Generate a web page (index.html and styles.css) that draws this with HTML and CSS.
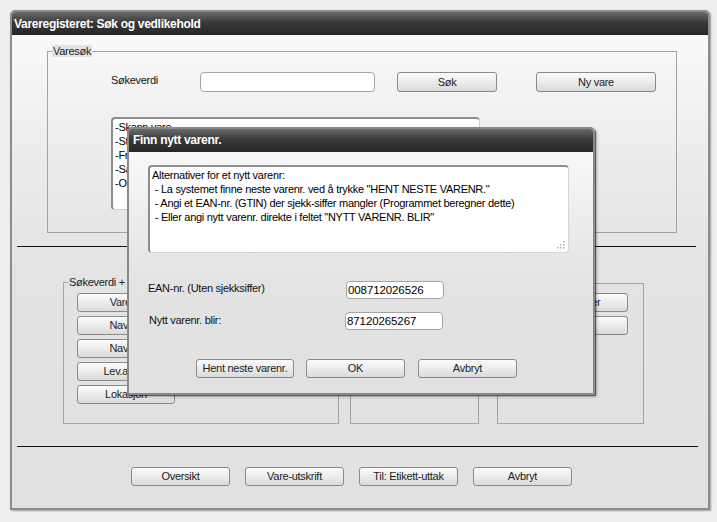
FILE: index.html
```html
<!DOCTYPE html>
<html>
<head>
<meta charset="utf-8">
<link rel="stylesheet" href="styles.css">
</head>
<body>
<div class="window">
  <div class="titlebar">Vareregisteret: Søk og vedlikehold</div>
  <div class="content">
    <fieldset class="group search">
      <legend>Varesøk</legend>
      <div class="search-inner">
        <div class="search-row">
          <span class="lbl">Søkeverdi</span>
          <div class="input search-input"></div>
          <button class="btn btn-sok">Søk</button>
          <button class="btn btn-ny">Ny vare</button>
        </div>
        <div class="listbox">
          <div>-Skann vare</div>
          <div>-Standard søk</div>
          <div>-Fritekst søk</div>
          <div>-Sammensatt søk</div>
          <div>-Oppslag</div>
        </div>
      </div>
    </fieldset>
    <div class="sep"></div>
    <div class="groups">
      <fieldset class="group g1">
        <legend>Søkeverdi + sortering</legend>
        <div class="btn-col g1-col">
          <button class="btn">Varenr.</button>
          <button class="btn">Navn 1</button>
          <button class="btn">Navn 2</button>
          <button class="btn">Lev.art.nr.</button>
          <button class="btn">Lokasjon</button>
        </div>
      </fieldset>
      <fieldset class="group g2"></fieldset>
      <fieldset class="group g3">
        <div class="btn-col">
          <button class="btn">Varelister</button>
          <button class="btn">Lager</button>
        </div>
      </fieldset>
    </div>
    <div class="sep sep2"></div>
    <div class="actions">
      <button class="btn">Oversikt</button>
      <button class="btn">Vare-utskrift</button>
      <button class="btn">Til: Etikett-uttak</button>
      <button class="btn">Avbryt</button>
    </div>
  </div>
</div>

<div class="modal">
  <div class="titlebar modal-title">Finn nytt varenr.</div>
  <div class="modal-body">
    <div class="textarea">
      <div>Alternativer for et nytt varenr:</div>
      <div>&nbsp;- La systemet finne neste varenr. ved å trykke "HENT NESTE VARENR."</div>
      <div>&nbsp;- Angi et EAN-nr. (GTIN) der sjekk-siffer mangler (Programmet beregner dette)</div>
      <div>&nbsp;- Eller angi nytt varenr. direkte i feltet "NYTT VARENR. BLIR"</div>
      <svg class="grip" width="10" height="10" viewBox="0 0 10 10">
        <rect x="8" y="2" width="1.5" height="1.5" fill="#b0b0b0"/>
        <rect x="5" y="5" width="1.5" height="1.5" fill="#b0b0b0"/>
        <rect x="8" y="5" width="1.5" height="1.5" fill="#b0b0b0"/>
        <rect x="2" y="8" width="1.5" height="1.5" fill="#b0b0b0"/>
        <rect x="5" y="8" width="1.5" height="1.5" fill="#b0b0b0"/>
        <rect x="8" y="8" width="1.5" height="1.5" fill="#b0b0b0"/>
      </svg>
    </div>
    <div class="field-row row1">
      <span class="flbl">EAN-nr. (Uten sjekksiffer)</span>
      <div class="input small-input">008712026526</div>
    </div>
    <div class="field-row row2">
      <span class="flbl flbl2">Nytt varenr. blir:</span>
      <div class="input small-input">87120265267</div>
    </div>
    <div class="modal-actions">
      <button class="btn m-hent">Hent neste varenr.</button>
      <button class="btn m-ok">OK</button>
      <button class="btn m-avbryt">Avbryt</button>
    </div>
  </div>
</div>
</body>
</html>
```

FILE: styles.css
```css
* { box-sizing: border-box; }
html, body { margin: 0; padding: 0; }
body {
  width: 717px;
  height: 522px;
  overflow: hidden;
  position: relative;
  background: #eeeeee;
  font-family: "Liberation Sans", Arial, sans-serif;
  font-size: 11px;
  letter-spacing: -0.28px;
  color: #111;
}
.window {
  margin: 10px 0 0 10px;
  width: 700px;
  height: 500px;
  border: 2px solid #8c8c8c;
  border-radius: 5px 5px 0 0;
  box-shadow: 1px 1px 2px rgba(0,0,0,0.35);
  display: flex;
  flex-direction: column;
  overflow: hidden;
}
.titlebar {
  height: 23px;
  flex: none;
  background: linear-gradient(#6b6b6b, #3a3a3a 45%, #262626);
  color: #fff;
  font-weight: bold;
  font-size: 12px;
  letter-spacing: -0.3px;
  line-height: 14px;
  padding: 5px 0 0 2px;
}
.content {
  flex: 1;
  background: linear-gradient(#f9f9f9 0, #ececec 25%, #e3e3e3 50%, #e1e1e1 100%);
  padding: 10px 0 0 5px;
}
.group {
  margin: 0;
  padding: 0;
  min-width: 0;
  border: 1px solid #a3a3a3;
}
.group legend {
  padding: 0 1px;
  margin-left: 4px;
  line-height: 12px;
  height: 12px;
  background: #e3e3e3;
  color: #222;
}
.search {
  margin-left: 30px;
  width: 630px;
  height: 188px;
  padding: 15px 0 0 0;
}
.search-inner { margin-left: 63px; }
.search-row {
  display: flex;
  align-items: flex-start;
}
.lbl {
  width: 89px;
  padding-top: 2px;
  line-height: 13px;
  color: #111;
}
.input {
  background: #fff;
  border: 1px solid #a5a5a5;
  border-radius: 4px;
  height: 20px;
  line-height: 18px;
  padding-left: 1px;
  font-size: 11.5px;
  letter-spacing: -0.1px;
  color: #000;
}
.search-input { width: 175px; }
.btn {
  font-family: "Liberation Sans", Arial, sans-serif;
  font-size: 11px;
  letter-spacing: -0.28px;
  color: #1c1c1c;
  height: 19px;
  width: 98px;
  padding: 0;
  line-height: 17px;
  text-align: center;
  border: 1px solid #8a8a8a;
  border-radius: 3px;
  background: linear-gradient(#fbfbfb, #ececec 50%, #dadada);
  white-space: nowrap;
  overflow: hidden;
}
.btn-sok { margin-left: 22px; width: 100px; height: 20px; }
.btn-ny { margin-left: 39px; width: 120px; height: 20px; }
.listbox {
  margin-top: 25px;
  width: 369px;
  height: 93px;
  background: #fff;
  border: 1px solid #d0d0d0;
  border-top: 2px solid #8e8e8e;
  border-left: 2px solid #8e8e8e;
  border-radius: 4px;
  padding: 1px 0 0 2px;
  line-height: 14px;
  color: #000;
}
.sep {
  margin-top: 13px;
  width: 679px;
  height: 1px;
  background: #111;
}
.groups {
  display: flex;
  align-items: flex-start;
  margin-top: 29px;
}
.g1 {
  margin-left: 46px;
  width: 276px;
  height: 148px;
  padding: 5px 0 0 0;
}
.g1-col { margin-left: 13px; }
.g2 {
  margin-top: 6px;
  margin-left: 11px;
  width: 129px;
  height: 142px;
}
.g3 {
  margin-top: 7px;
  margin-left: 18px;
  width: 147px;
  height: 141px;
  padding: 9px 0 0 32px;
}
.btn-col {
  display: flex;
  flex-direction: column;
  gap: 4px;
}
.sep2 {
  margin-top: 22px;
  width: 681px;
}
.actions {
  display: flex;
  gap: 15px;
  margin-top: 20px;
  padding-left: 114px;
}
.actions .btn { width: 99px; }

.modal {
  position: absolute;
  left: 127px;
  top: 127px;
  width: 468px;
  height: 268px;
  border: 2px solid #8a8a8a;
  border-radius: 5px 5px 0 0;
  box-shadow: 1px 1px 1px rgba(0,0,0,0.55), 2px 2px 3px rgba(0,0,0,0.25);
  display: flex;
  flex-direction: column;
  overflow: hidden;
}
.modal-title {
  height: 23px;
  padding: 4px 0 0 4px;
}
.modal-body {
  flex: 1;
  background: linear-gradient(#f8f8f8 0, #ececec 30%, #e3e3e3 55%, #e1e1e1 100%);
  padding: 13px 0 0 19px;
}
.textarea {
  position: relative;
  width: 421px;
  height: 88px;
  background: #fff;
  border: 1px solid #d6d6d6;
  border-top: 2px solid #8e8e8e;
  border-left: 2px solid #8e8e8e;
  border-radius: 4px;
  padding: 1px 0 0 2px;
  line-height: 14px;
  color: #000;
}
.grip {
  position: absolute;
  right: 3px;
  bottom: 3px;
}
.field-row {
  display: flex;
  align-items: flex-start;
}
.row1 { margin-top: 28px; }
.row2 { margin-top: 13px; }
.flbl {
  width: 198px;
  line-height: 13px;
  padding-top: 1px;
  color: #111;
}
.flbl2 { padding-left: 1px; width: 197px; padding-top: 2px; }
.small-input {
  width: 98px;
  height: 18px;
  line-height: 16px;
  padding-left: 1px;
}
.modal-actions {
  display: flex;
  margin-top: 29px;
  padding-left: 48px;
}
.m-ok { margin-left: 12px; width: 99px; }
.m-avbryt { margin-left: 13px; width: 99px; }
```
